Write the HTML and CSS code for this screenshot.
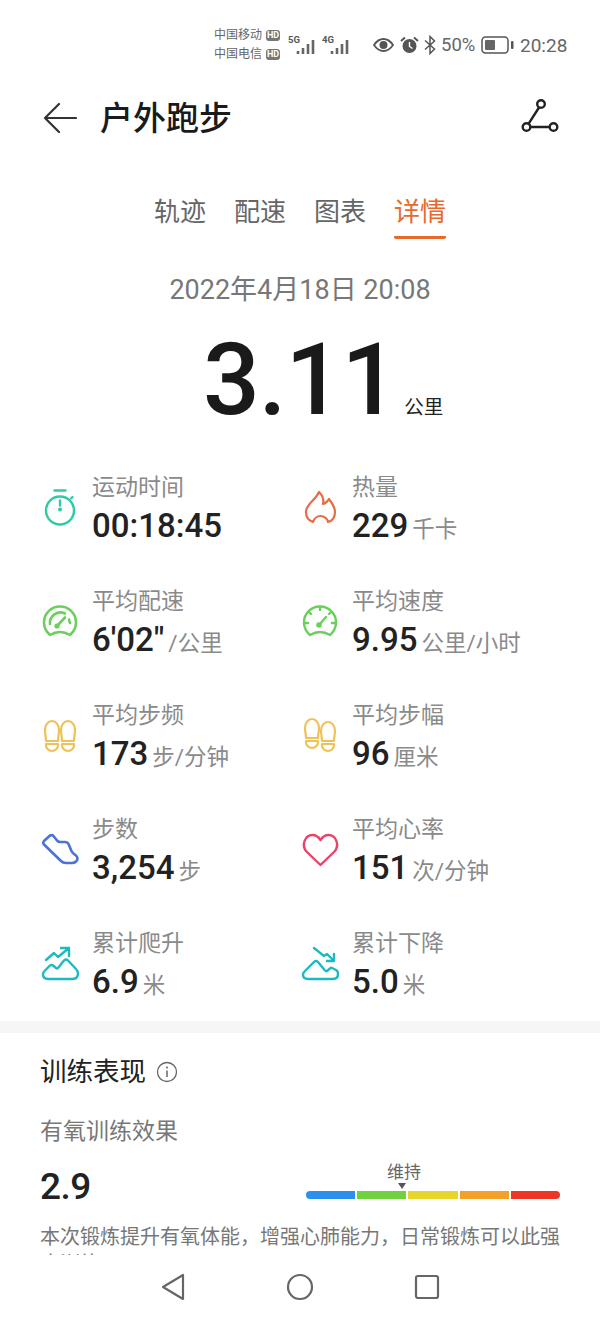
FILE: index.html
```html
<!DOCTYPE html>
<html lang="zh-CN">
<head>
<meta charset="utf-8">
<title>户外跑步</title>
<link rel="stylesheet" href="styles.css">
</head>
<body>
<div class="page">
  <main class="main">
    <div class="status">
      <div class="carriers">
        <div class="carrier">中国移动<span class="hd">HD</span></div>
        <div class="carrier">中国电信<span class="hd">HD</span></div>
      </div>
      <div class="signal"><span class="net">5G</span>
        <svg width="20" height="16" viewBox="0 0 20 16"><path d="M2 12v3M7 9v6M12 5v10M17 1v14" stroke="#666" stroke-width="2.6" fill="none"/></svg></div>
      <div class="signal second"><span class="net">4G</span>
        <svg width="20" height="16" viewBox="0 0 20 16"><path d="M2 12v3M7 9v6M12 5v10M17 1v14" stroke="#666" stroke-width="2.6" fill="none"/></svg></div>
      <svg class="s-eye" width="21" height="14" viewBox="0 0 21 14"><path d="M1 7C4 2.500 7 1 10.500 1S17 2.500 20 7C17 11.500 14 13 10.500 13S4 11.500 1 7Z" fill="none" stroke="#555" stroke-width="1.800"/><circle cx="10.500" cy="7" r="4" fill="#555"/></svg>
      <svg class="s-alarm" width="19" height="18" viewBox="0 0 19 18"><circle cx="9.500" cy="10" r="7" fill="#555"/><path d="M1 5L5 1.500M18 5L14 1.500" stroke="#555" stroke-width="2"/><path d="M9.500 6v4.500l3 2" stroke="#fff" stroke-width="1.400" fill="none"/></svg>
      <svg class="s-bt" width="14" height="20" viewBox="0 0 14 20"><path d="M2 5.500L11.500 14 7 18.500V1.500L11.500 6 2 14.500" fill="none" stroke="#555" stroke-width="1.500"/></svg>
      <span class="s-pct">50%</span>
      <svg class="s-batt" width="33" height="18" viewBox="0 0 33 18"><rect x="1" y="1" width="26" height="16" rx="3.500" fill="none" stroke="#555" stroke-width="1.500"/><rect x="4" y="4" width="10" height="10" rx="1" fill="#666"/><rect x="30" y="5" width="2.500" height="8" rx="1" fill="#555"/></svg>
      <span class="s-time">20:28</span>
    </div>

    <header class="header">
      <svg class="back" width="34" height="32" viewBox="0 0 34 32"><path d="M33 16H2M16 2L2 16l14 14" fill="none" stroke="#333" stroke-width="2.200" stroke-linecap="round" stroke-linejoin="round"/></svg>
      <h1 class="title">户外跑步</h1>
      <svg class="route" width="38" height="36" viewBox="0 0 38 36"><g fill="none" stroke="#222" stroke-width="2.400"><circle cx="20" cy="5" r="3.800"/><circle cx="5.500" cy="28" r="3.800"/><circle cx="32.500" cy="28" r="3.800"/><path d="M18 8.500L7.500 24.800M9.300 28H28.700"/></g></svg>
    </header>

    <nav class="tabs">
      <span class="tab">轨迹</span>
      <span class="tab">配速</span>
      <span class="tab">图表</span>
      <span class="tab active">详情</span>
    </nav>

    <div class="date">2022年4月18日 20:08</div>

    <div class="distance"><span class="big">3.11</span><span class="big-unit">公里</span></div>

    <section class="grid">
      <div class="stat">
        <svg class="icon" width="36" height="36" viewBox="0 0 36 36"><g fill="none" stroke="#2ecba6" stroke-width="2.400" stroke-linecap="round"><circle cx="18" cy="21.500" r="14"/><path d="M12.500 1.500H23.500M18 11.500v5M29 9.500l1.500-1.500"/></g><circle cx="18" cy="20.500" r="2" fill="#2ecba6"/></svg>
        <div class="stat-text"><div class="label">运动时间</div><div class="value">00:18:45</div></div>
      </div>
      <div class="stat">
        <svg class="icon" width="36" height="36" viewBox="0 0 36 36"><path d="M11 33C5 31 4 26 4 23C4 15 13 12 17 3C21 7 22 11 21 15C24 14 26 12 27 10C30 14 33 18 33 23C33 29 30 32 26 33C26 30 22 27 18.500 27C15 27 12 30 11 33Z" fill="none" stroke="#e56d47" stroke-width="2.200" stroke-linejoin="round"/></svg>
        <div class="stat-text"><div class="label">热量</div><div class="value">229<span class="unit">千卡</span></div></div>
      </div>
      <div class="stat">
        <svg class="icon" width="36" height="36" viewBox="0 0 36 36"><g fill="none" stroke="#6bcf5c" stroke-width="2.600" stroke-linecap="round" stroke-linejoin="round"><path d="M8 32C3.500 28 2 24 2 19.500A16 16 0 0 1 34 19.500C34 24 32.500 28 28 32Q18 26 8 32Z"/><path d="M8 21A10.500 10.500 0 0 1 23 10.500M28 20l-1-3.500"/><path d="M15 23L23 14.500"/></g><circle cx="15" cy="23" r="2.600" fill="#6bcf5c"/></svg>
        <div class="stat-text"><div class="label">平均配速</div><div class="value">6'02"<span class="unit">/公里</span></div></div>
      </div>
      <div class="stat">
        <svg class="icon" width="36" height="36" viewBox="0 0 36 36"><g fill="none" stroke="#6bcf5c" stroke-width="2.400" stroke-linecap="round" stroke-linejoin="round"><path d="M8 32C3.500 28 2 24 2 19.500A16 16 0 0 1 34 19.500C34 24 32.500 28 28 32Q18 26 8 32Z"/><path d="M18 4v3M7 9l2 2M29 9l-2 2M3 20h3M33 20h-3"/><path d="M17 22L24 14"/></g><circle cx="17" cy="22" r="2.800" fill="#6bcf5c"/></svg>
        <div class="stat-text"><div class="label">平均速度</div><div class="value">9.95<span class="unit">公里/小时</span></div></div>
      </div>
      <div class="stat">
        <svg class="icon" width="36" height="36" viewBox="0 0 36 36"><g fill="none" stroke="#eec254" stroke-width="2.200" stroke-linejoin="round"><path d="M10 4C14 4 17 8 17 13C17 17 16 20 16 24H4C4 20 3 17 3 13C3 8 6 4 10 4Z"/><path d="M4 27H16V28A6 6 0 0 1 4 28Z"/><path d="M26 4C30 4 33 8 33 13C33 17 32 20 32 24H20C20 20 19 17 19 13C19 8 22 4 26 4Z"/><path d="M20 27H32V28A6 6 0 0 1 20 28Z"/></g></svg>
        <div class="stat-text"><div class="label">平均步频</div><div class="value">173<span class="unit">步/分钟</span></div></div>
      </div>
      <div class="stat">
        <svg class="icon" width="36" height="36" viewBox="0 0 36 36"><g fill="none" stroke="#eec254" stroke-width="2.200" stroke-linejoin="round"><path d="M10 2C14 2 17 6 17 11C17 15 16 17 16 21H4C4 17 3 15 3 11C3 6 6 2 10 2Z"/><path d="M4 24H16V25A6 6 0 0 1 4 25Z"/><path d="M26 5C30 5 33 9 33 14C33 18 32 20 32 24H20C20 20 19 18 19 14C19 9 22 5 26 5Z"/><path d="M20 27H32V28A6 6 0 0 1 20 28Z"/></g></svg>
        <div class="stat-text"><div class="label">平均步幅</div><div class="value">96<span class="unit">厘米</span></div></div>
      </div>
      <div class="stat">
        <svg class="icon" width="36" height="36" viewBox="0 0 36 36"><path d="M2 10L8 4.500Q10 3.500 11.500 5L15 9.500Q16.500 11 18 11H23Q26 11 27 14L29 19Q30 21.500 32 23L34 24.500Q37 28 34 30.500Q32.500 32 30 32H24Q21 32 19 30L2 13.500Q0.500 12 2 10Z" fill="none" stroke="#4a72d8" stroke-width="2.600" stroke-linejoin="round"/></svg>
        <div class="stat-text"><div class="label">步数</div><div class="value">3,254<span class="unit">步</span></div></div>
      </div>
      <div class="stat">
        <svg class="icon" width="36" height="36" viewBox="0 0 36 36"><path d="M18.500 34L4.500 20.500C-1 14 3 4 10.500 4C14 4 16.500 6 18.500 9C20.500 6 23 4 26.500 4C34 4 38 14 32.500 20.500Z" fill="none" stroke="#e8436a" stroke-width="2.400" stroke-linejoin="round"/></svg>
        <div class="stat-text"><div class="label">平均心率</div><div class="value">151<span class="unit">次/分钟</span></div></div>
      </div>
      <div class="stat">
        <svg class="icon" width="36" height="36" viewBox="0 0 36 36"><g fill="none" stroke="#1fb9c0" stroke-width="2.400" stroke-linejoin="round" stroke-linecap="round"><path d="M6 34H30Q36 34 36 28.500Q36 26 34 24L26 15.500Q24 13.500 22 15.500L16 23Q15 24 14 23L11 20.500Q9.500 19.500 8 20.500L3 25.500Q1 27.500 1 29Q1 34 6 34Z"/><path d="M4 15L12 8L16 12L27 3M19 3H27V11"/></g></svg>
        <div class="stat-text"><div class="label">累计爬升</div><div class="value">6.9<span class="unit">米</span></div></div>
      </div>
      <div class="stat">
        <svg class="icon" width="36" height="36" viewBox="0 0 36 36"><g fill="none" stroke="#1fb9c0" stroke-width="2.400" stroke-linejoin="round" stroke-linecap="round"><path d="M6 34H31Q36 34 36 29Q36 26 34 25L30 23Q29 22.500 28 23.500L25 26Q24 26.500 23 25.500L16 17Q14 15 12 17L3 26Q1 28 1 29.500Q1 34 6 34Z"/><path d="M12 3L22 11L25 9L32 16M32 9V16H25"/></g></svg>
        <div class="stat-text"><div class="label">累计下降</div><div class="value">5.0<span class="unit">米</span></div></div>
      </div>
    </section>

    <section class="training">
      <div class="train-head">
        <h2 class="train-title">训练表现</h2>
        <svg class="info" width="22" height="22" viewBox="0 0 22 22"><circle cx="11" cy="11" r="9.500" fill="none" stroke="#666" stroke-width="1.300"/><path d="M11 9.500v6.500" stroke="#666" stroke-width="1.500"/><circle cx="11" cy="6.500" r="1" fill="#666"/></svg>
      </div>
      <div class="sub">有氧训练效果</div>
      <div class="score-row">
        <div class="score">2.9</div>
        <div class="gauge">
          <div class="gauge-label">维持</div>
          <div class="gauge-mark"></div>
          <div class="gauge-bar">
            <span class="seg seg-blue"></span>
            <span class="seg seg-green"></span>
            <span class="seg seg-yellow"></span>
            <span class="seg seg-orange"></span>
            <span class="seg seg-red"></span>
          </div>
        </div>
      </div>
      <p class="desc">本次锻炼提升有氧体能，增强心肺能力，日常锻炼可以此强度训练。</p>
    </section>
  </main>

  <footer class="navbar">
    <svg width="26" height="28" viewBox="0 0 26 28"><path d="M23 2V26L3 14Z" fill="none" stroke="#666" stroke-width="2.200" stroke-linejoin="round"/></svg>
    <svg width="28" height="28" viewBox="0 0 28 28"><circle cx="14" cy="14" r="12" fill="none" stroke="#666" stroke-width="2.200"/></svg>
    <svg width="26" height="28" viewBox="0 0 26 28"><rect x="2" y="3" width="22" height="22" rx="2" fill="none" stroke="#666" stroke-width="2.200"/></svg>
  </footer>
</div>
</body>
</html>
```

FILE: styles.css
```css
* { box-sizing: border-box; }
html, body { margin: 0; padding: 0; background: #fff; }
body {
  font-family: Roboto, "Noto Sans CJK SC", sans-serif;
  color: #1a1a1a;
}
.page { width: 600px; height: 1320px; display: flex; flex-direction: column; overflow: hidden; }
.main { height: 1255px; overflow: hidden; flex: none; }

/* status bar */
.status {
  height: 91px;
  display: flex;
  align-items: center;
  padding-left: 214px;
  padding-bottom: 1px;
  color: #666;
}
.carriers { width: 74px; flex: none; }
.carrier { display: flex; align-items: center; font-size: 12px; line-height: 19px; height: 19px; color: #666; }
.hd {
  margin-left: 4px;
  width: 14px;
  height: 11px;
  border-radius: 3px;
  background: #777;
  color: #fff;
  font-size: 9px;
  line-height: 11px;
  font-weight: 700;
  text-align: center;
}
.signal { position: relative; width: 28px; height: 20px; flex: none; }
.signal svg { position: absolute; right: 0; bottom: 0; }
.net { position: absolute; left: 0; top: -1px; font-size: 9.500px; line-height: 11px; font-weight: 700; color: #555; }
.second { margin-left: 6px; }
.s-eye { margin-left: 23px; flex: none; }
.s-alarm { margin-left: 6px; flex: none; }
.s-bt { margin-left: 4px; flex: none; }
.s-pct { margin-left: 4px; font-size: 18.500px; width: 36px; flex: none; color: #666; }
.s-batt { margin-left: 4px; flex: none; }
.s-time { margin-left: 6px; font-size: 19px; color: #666; }

/* header */
.header { height: 56px; display: flex; align-items: center; padding-left: 43px; padding-right: 41px; }
.back { flex: none; margin-top: -3px; }
.title { margin: 0 0 0 23px; font-size: 33px; line-height: 44px; font-weight: 500; color: #1a1a1a; flex: 1; }
.route { flex: none; margin-top: -4px; }

/* tabs */
.tabs { margin-top: 47px; display: flex; justify-content: center; gap: 28px; }
.tab { font-size: 26px; line-height: 36px; height: 45px; color: #666; }
.active { color: #e8692e; border-bottom: 3px solid #e8692e; border-radius: 0 0 2px 2px; padding-bottom: 6px; }

.date { margin-top: 33px; text-align: center; font-size: 27px; line-height: 36px; color: #777; }

.distance { margin-top: 20px; height: 104px; padding-left: 203px; display: flex; align-items: baseline; }
.big { font-size: 100px; line-height: 104px; font-weight: 500; letter-spacing: -1px; color: #1a1a1a; }
.big-unit { margin-left: 7px; font-size: 19.500px; color: #222; }

/* stats */
.grid {
  margin-top: 38px;
  padding-left: 42px;
  display: grid;
  grid-template-columns: 260px 1fr;
  grid-auto-rows: 80px;
  row-gap: 34px;
}
.stat { display: flex; align-items: flex-start; gap: 14px; }
.icon { flex: none; margin-top: 19px; overflow: visible; }
.label { font-size: 23px; line-height: 36px; color: #8a8a8a; }
.value { font-size: 33px; line-height: 40px; font-weight: 500; color: #222; white-space: nowrap; }
.unit { margin-left: 4px; font-size: 22.500px; font-weight: 400; color: #8a8a8a; }

/* training */
.training { margin-top: 15px; border-top: 12px solid #f6f6f6; padding: 21px 40px 0; }
.train-head { display: flex; align-items: center; gap: 10px; }
.train-title { margin: 0; font-size: 26.500px; line-height: 36px; font-weight: 400; color: #222; }
.sub { margin-top: 24px; font-size: 23px; line-height: 36px; color: #777; }
.score-row { margin-top: 11px; display: flex; justify-content: space-between; align-items: flex-start; }
.score { margin-top: 4px; font-size: 37px; line-height: 44px; font-weight: 500; letter-spacing: -0.500px; color: #222; }
.gauge { width: 254px; }
.gauge-label { padding-left: 81px; font-size: 17px; line-height: 22px; color: #666; }
.gauge-mark {
  margin-left: 92px;
  width: 0;
  height: 0;
  border-left: 4px solid transparent;
  border-right: 4px solid transparent;
  border-top: 6px solid #555;
}
.gauge-bar { margin-top: 2px; height: 8px; display: flex; gap: 2px; border-radius: 4px; overflow: hidden; }
.seg { flex: 1; }
.seg-blue { background: #2b8ff0; }
.seg-green { background: #6fd13f; }
.seg-yellow { background: #e6d52a; }
.seg-orange { background: #f5a028; }
.seg-red { background: #ee3526; }
.desc { margin: 15px 0 0; font-size: 20px; line-height: 27px; color: #777; }

/* navigation bar */
.navbar {
  flex: 1;
  display: flex;
  justify-content: center;
  align-items: flex-start;
  gap: 100px;
  padding-top: 18px;
  padding-left: 0;
  background: #fff;
}
```
